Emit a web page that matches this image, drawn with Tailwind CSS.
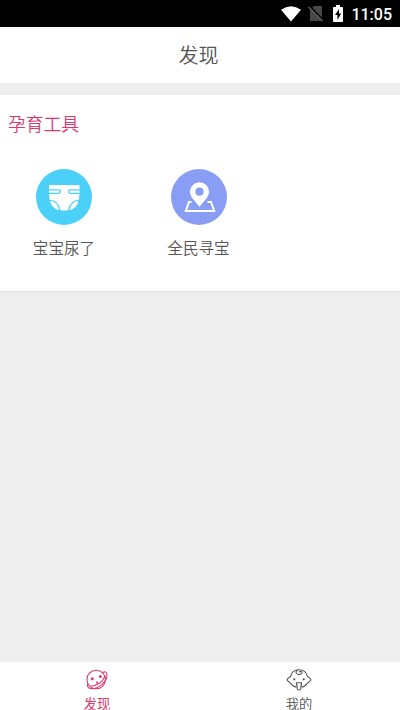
<!DOCTYPE html>
<html lang="zh-CN">
<head>
<meta charset="utf-8">
<meta name="viewport" content="width=device-width, initial-scale=1">
<title>发现</title>
<script src="https://cdn.jsdelivr.net/npm/@tailwindcss/browser@4"></script>
</head>
<body class="h-[710px] w-[400px] overflow-hidden bg-[#eeeeee] font-['Noto_Sans_CJK_SC',sans-serif] text-[#555555]">
<div class="flex h-[710px] flex-col">
  <div class="flex h-[27px] shrink-0 items-center justify-end bg-black pr-2 text-white">
    <svg class="mr-[7px] h-4 w-5" viewBox="0 0 20 16" fill="currentColor"><path d="M0 3.8Q10-3.3 20 3.8L10 15.6Z"/></svg>
    <svg class="mr-[9px] h-[17px] w-4" viewBox="0 0 16 17"><path d="M6 1H14V16H2V5Z" fill="#484848"/><path d="M1 1.500L15.500 16" stroke="#000" stroke-width="3"/><path d="M.5 2L14.500 16" stroke="#686868" stroke-width="1.300"/></svg>
    <svg class="mr-2 h-[17px] w-[10px]" viewBox="0 0 10 17"><path d="M3 0H7V2H9.200Q10 2 10 3V16Q10 17 9.200 17H.8Q0 17 0 16V3Q0 2 .8 2H3Z" fill="#fff"/><path d="M6 4L2 10H4.400V15L8.200 8.500H6Z" fill="#000"/></svg>
    <span class="pt-px font-[Roboto] text-[16px] leading-[27px] font-medium">11:05</span>
  </div>
  <header class="flex h-14 shrink-0 items-center justify-center bg-white">
    <h1 class="pr-[3px] text-[20px] leading-6 font-[350]">发现</h1>
  </header>
  <main class="mt-3 h-[197px] shrink-0 border-b border-[#e2e2e2] bg-white pt-4">
    <h2 class="pl-2 text-[17.800px] leading-6 font-[350] text-[#d83a73]">孕育工具</h2>
    <div class="mt-[34px] flex gap-[6.500px]">
      <div class="flex w-32 flex-col items-center">
        <svg class="h-14 w-14" viewBox="0 0 56 56"><circle cx="28" cy="28" r="28" fill="#4bd0f7"/><path d="M13 16H43.500V24Q43.500 37 36 40.500Q28 42.500 20.500 40.500Q13 37 13 24Z" fill="#fff"/><g fill="none" stroke="#4bd0f7" stroke-width="1.200"><path d="M13 20.800H22.500Q24.500 20.800 24.500 22.500T22.500 24.300H13M43.500 20.800H34.500Q32.500 20.800 32.500 22.500T34.500 24.300H43.500"/><path d="M13 31.300Q22.500 31.300 23.800 41.500M43.500 31.300Q34 31.300 32.700 41.500"/></g></svg>
        <span class="mt-[10px] text-[15.600px] leading-6 font-[350]">宝宝尿了</span>
      </div>
      <div class="flex w-32 flex-col items-center">
        <svg class="h-14 w-14" viewBox="0 0 56 56"><circle cx="28" cy="28" r="28" fill="#899df4"/><path d="M20.500 33H18L14.800 42H43.200L40 33H36.500" fill="none" stroke="#fff" stroke-width="2"/><path fill-rule="evenodd" d="M28.500 13.200A9.500 9.500 0 0 0 19 22.700C19 28.500 25 32.500 28.500 38C32 32.500 38 28.500 38 22.700A9.500 9.500 0 0 0 28.500 13.200ZM28.500 18.600A4.100 4.100 0 1 1 28.500 26.800A4.100 4.100 0 0 1 28.500 18.600Z" fill="#fff"/></svg>
        <span class="mt-[10px] text-[15.600px] leading-6 font-[350]">全民寻宝</span>
      </div>
    </div>
  </main>
  <nav class="mt-auto flex h-12 shrink-0 bg-white text-[13.300px]">
    <div class="flex w-[194px] flex-col items-center pt-[6px] text-[#d83a73]">
      <svg class="h-6 w-6 shrink-0" viewBox="0 0 24 24" fill="none" stroke="currentColor" stroke-width="1.100"><circle cx="11.200" cy="11.500" r="9.300"/><path d="M17.500 4.500Q22 2.500 22 7C22.200 13.500 13 21.500 5.500 20.500Q1.800 20 2.600 15.500M19.700 7.800C19 13 12 18.500 4.800 18.200"/><g fill="currentColor" stroke="none"><circle cx="7.300" cy="10.700" r="1.500"/><circle cx="15.400" cy="8.400" r="1.500"/><circle cx="12" cy="14.500" r="1.100"/></g></svg>
      <span class="mt-[5px] shrink-0 leading-[13px]">发现</span>
    </div>
    <div class="ml-2 flex w-[194px] flex-col items-center pt-[6px]">
      <svg class="h-6 w-[26px] shrink-0" viewBox="0 0 26 24" fill="none" stroke="currentColor" stroke-width="1.100"><path d="M10.500 19.300C7.500 18.700 5.800 17.300 4.700 15.300L1.500 12.600Q.8 11.700 1.500 10.900L4.700 8.200C5.700 4 9 1.800 13 1.800S20.300 4 21.300 8.200L24.500 10.900Q25.200 11.700 24.500 12.600L21.300 15.300C20.200 17.300 18.500 18.700 15.500 19.300"/><path d="M11.500 2Q8.800 4.300 11 5.900Q13 7.100 15.200 5.700Q17 4 15 3.300Q13.400 3 13.200 4.300M10.500 14.800H15.500V17H14.900V20.200Q14.900 22 13 22T11.100 20.200V17H10.500Z"/><g fill="currentColor" stroke="none"><circle cx="8.300" cy="11.300" r="1.100"/><circle cx="17.700" cy="11.300" r="1.100"/></g></svg>
      <span class="mt-[5px] shrink-0 leading-[13px] font-[350]">我的</span>
    </div>
  </nav>
</div>
</body>
</html>
